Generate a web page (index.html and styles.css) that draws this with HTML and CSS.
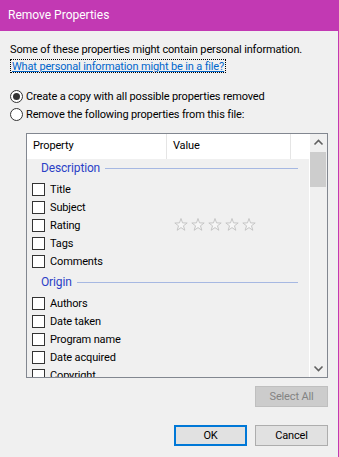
FILE: index.html
```html
<!DOCTYPE html>
<html lang="en">
  <head>
    <meta charset="UTF-8" />
    <title>Remove Properties</title>
    <link rel="stylesheet" href="styles.css">
  </head>
  <body>
    <div class="window">
      <div class="titlebar">Remove Properties</div>
      <div class="content">
        <p class="info">Some of these properties might contain personal information.</p>
        <a class="help-link" href="#">What personal information might be in a file?</a>

        <label class="radio-row">
          <span class="radio checked"></span>Create a copy with all possible properties removed
        </label>
        <label class="radio-row">
          <span class="radio"></span>Remove the following properties from this file:
        </label>

        <div class="listbox">
          <div class="list-main">
            <div class="list-header">
              <div class="col col-prop">Property</div>
              <div class="col col-value">Value</div>
              <div class="col col-extra"></div>
            </div>
            <div class="list-body">
              <div class="group">
                <span class="group-name">Description</span>
                <span class="group-line"></span>
              </div>
              <div class="row"><span class="cell-prop"><span class="check"></span>Title</span></div>
              <div class="row"><span class="cell-prop"><span class="check"></span>Subject</span></div>
              <div class="row">
                <span class="cell-prop"><span class="check"></span>Rating</span>
                <span class="cell-value stars">
                  <svg width="14" height="14" viewBox="0 0 14 14"><polygon points="7,0.5 8.53,4.9 13.18,4.99 9.47,7.8 10.82,12.26 7,9.6 3.18,12.26 4.53,7.8 0.82,4.99 5.47,4.9" /></svg>
                  <svg width="14" height="14" viewBox="0 0 14 14"><polygon points="7,0.5 8.53,4.9 13.18,4.99 9.47,7.8 10.82,12.26 7,9.6 3.18,12.26 4.53,7.8 0.82,4.99 5.47,4.9" /></svg>
                  <svg width="14" height="14" viewBox="0 0 14 14"><polygon points="7,0.5 8.53,4.9 13.18,4.99 9.47,7.8 10.82,12.26 7,9.6 3.18,12.26 4.53,7.8 0.82,4.99 5.47,4.9" /></svg>
                  <svg width="14" height="14" viewBox="0 0 14 14"><polygon points="7,0.5 8.53,4.9 13.18,4.99 9.47,7.8 10.82,12.26 7,9.6 3.18,12.26 4.53,7.8 0.82,4.99 5.47,4.9" /></svg>
                  <svg width="14" height="14" viewBox="0 0 14 14"><polygon points="7,0.5 8.53,4.9 13.18,4.99 9.47,7.8 10.82,12.26 7,9.6 3.18,12.26 4.53,7.8 0.82,4.99 5.47,4.9" /></svg>
                </span>
              </div>
              <div class="row"><span class="cell-prop"><span class="check"></span>Tags</span></div>
              <div class="row"><span class="cell-prop"><span class="check"></span>Comments</span></div>

              <div class="group group-next">
                <span class="group-name">Origin</span>
                <span class="group-line"></span>
              </div>
              <div class="row"><span class="cell-prop"><span class="check"></span>Authors</span></div>
              <div class="row"><span class="cell-prop"><span class="check"></span>Date taken</span></div>
              <div class="row"><span class="cell-prop"><span class="check"></span>Program name</span></div>
              <div class="row"><span class="cell-prop"><span class="check"></span>Date acquired</span></div>
              <div class="row"><span class="cell-prop"><span class="check"></span>Copyright</span></div>
            </div>
          </div>
          <div class="scrollbar">
            <div class="scroll-btn">
              <svg width="17" height="17" viewBox="0 0 17 17"><path d="M4.5 10.5 L8.5 6.5 L12.5 10.5" /></svg>
            </div>
            <div class="scroll-track"><div class="scroll-thumb"></div></div>
            <div class="scroll-btn">
              <svg width="17" height="17" viewBox="0 0 17 17"><path d="M4.5 6.5 L8.5 10.5 L12.5 6.5" /></svg>
            </div>
          </div>
        </div>

        <div class="btn-row">
          <button class="btn" disabled>Select All</button>
        </div>
        <div class="btn-row btn-row-bottom">
          <button class="btn btn-default">OK</button>
          <button class="btn">Cancel</button>
        </div>
      </div>
    </div>
  </body>
</html>
```

FILE: styles.css
```css
body {
  margin: 0;
  padding: 0;
  background-color: #f0f0f0;
  font-family: Roboto, "Noto Sans", sans-serif;
  font-size: 11px;
  letter-spacing: -0.15px;
  color: #000;
}
.window {
  width: 338px;
  height: 457px;
  border-right: 1px solid #c239b3;
  background-color: #f0f0f0;
}
.titlebar {
  height: 31px;
  line-height: 31px;
  padding-left: 8px;
  font-size: 12px;
  letter-spacing: 0;
  background-color: #c239b3;
  color: #fff;
}
.content {
  padding: 0 10px;
}
.info {
  margin: 0;
  padding-top: 11px;
  height: 15px;
  line-height: 15px;
}
.help-link {
  display: inline-block;
  margin-top: 2px;
  height: 14px;
  line-height: 13px;
  padding: 0 1px;
  border: 1px dotted #000;
  box-sizing: border-box;
  color: #0066cc;
}
.radio-row {
  display: flex;
  align-items: center;
  height: 18px;
}
.radio-row:first-of-type {
  margin-top: 14px;
}
.radio {
  width: 13px;
  height: 13px;
  margin-right: 3px;
  border: 1px solid #333;
  border-radius: 50%;
  background-color: #fff;
  box-sizing: border-box;
  position: relative;
}
.radio.checked::after {
  content: "";
  position: absolute;
  left: 2px;
  top: 2px;
  width: 7px;
  height: 7px;
  border-radius: 50%;
  background-color: #333;
}
.listbox {
  display: flex;
  margin: 10px 0 0 16px;
  height: 245px;
  border: 1px solid #828790;
  box-sizing: border-box;
  overflow: hidden;
}
.list-main {
  flex: 1;
  border-right: 1px solid #fff;
  overflow: hidden;
}
.list-header {
  display: flex;
  height: 25px;
  background-color: #fff;
}
.col {
  line-height: 24px;
  padding-left: 6px;
  border-right: 1px solid #e5e5e5;
  box-sizing: border-box;
}
.col-prop {
  width: 140px;
}
.col-value {
  width: 124px;
}
.col-extra {
  flex: 1;
  border-right: none;
}
.group {
  display: flex;
  align-items: center;
  height: 21px;
  padding: 0 0 3px 14px;
  box-sizing: border-box;
}
.group-next {
  margin-top: 3px;
}
.group-name {
  color: #2b3fc6;
  font-size: 12px;
  margin-right: 5px;
}
.group-line {
  flex: 1;
  height: 1px;
  margin-right: 11px;
  background-color: #a6b8e2;
}
.row {
  display: flex;
  align-items: center;
  height: 18px;
}
.cell-prop {
  display: flex;
  align-items: center;
  width: 140px;
  padding-left: 5px;
  box-sizing: border-box;
}
.check {
  width: 13px;
  height: 13px;
  margin-right: 5px;
  border: 1px solid #333;
  background-color: #fff;
  box-sizing: border-box;
}
.stars {
  display: flex;
  gap: 3px;
  padding-left: 7px;
}
.stars polygon {
  fill: #f6f6f6;
  stroke: #c6c6c6;
  stroke-width: 1;
}
.scrollbar {
  display: flex;
  flex-direction: column;
  width: 17px;
  background-color: #f0f0f0;
}
.scroll-btn {
  height: 17px;
}
.scroll-btn path {
  fill: none;
  stroke: #606060;
  stroke-width: 1.6;
}
.scroll-track {
  flex: 1;
}
.scroll-thumb {
  height: 35px;
  margin: 1px 1px 0 0;
  background-color: #cdcdcd;
}
.btn-row {
  display: flex;
  justify-content: flex-end;
  gap: 8px;
  margin-top: 8px;
}
.btn-row-bottom {
  margin-top: 18px;
}
.btn {
  width: 73px;
  height: 21px;
  padding: 0;
  font-family: inherit;
  font-size: 11px;
  letter-spacing: inherit;
  color: #000;
  background-color: #e1e1e1;
  border: 1px solid #adadad;
}
.btn:disabled {
  color: #838383;
  background-color: #cccccc;
  border-color: #bfbfbf;
}
.btn-default {
  border: 2px solid #0078d7;
}
```
